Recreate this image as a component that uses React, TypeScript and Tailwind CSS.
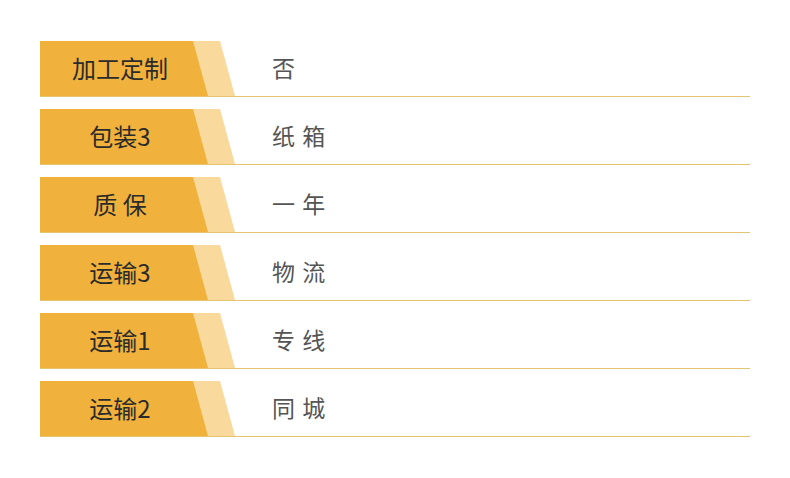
import React from "react";

const rows: [string, string][] = [
  ["加工定制", "否"],
  ["包装3", "纸 箱"],
  ["质 保", "一 年"],
  ["运输3", "物 流"],
  ["运输1", "专 线"],
  ["运输2", "同 城"],
];

export default function App() {
  return (
    <div
      className="w-[790px] h-[478px] bg-white pt-[41px] pl-[40px]"
      style={{ fontFamily: '"Noto Sans CJK SC", "Noto Sans", sans-serif' }}
    >
      <div className="flex flex-col gap-[12px] w-[710px]">
        {rows.map(([k, v]) => (
          <div key={k} className="flex items-center h-[56px] border-b border-[#e3c46f]">
            <div className="relative w-[195px] h-full shrink-0">
              <div className="absolute inset-0 bg-[#f9da9c] [clip-path:polygon(0_0,180px_0,195px_100%,0_100%)]" />
              <div className="absolute inset-y-0 left-0 w-[168px] bg-[#f0b23c] [clip-path:polygon(0_0,153px_0,168px_100%,0_100%)]" />
              <div className="absolute inset-y-0 left-0 w-[160px] flex items-center justify-center text-[24px] text-[#2b2b2b] whitespace-pre pb-[2px]">
                {k}
              </div>
            </div>
            <div className="pl-[37px] text-[23px] text-[#555] whitespace-pre tracking-[1px] pb-[2px]">{v}</div>
          </div>
        ))}
      </div>
    </div>
  );
}
